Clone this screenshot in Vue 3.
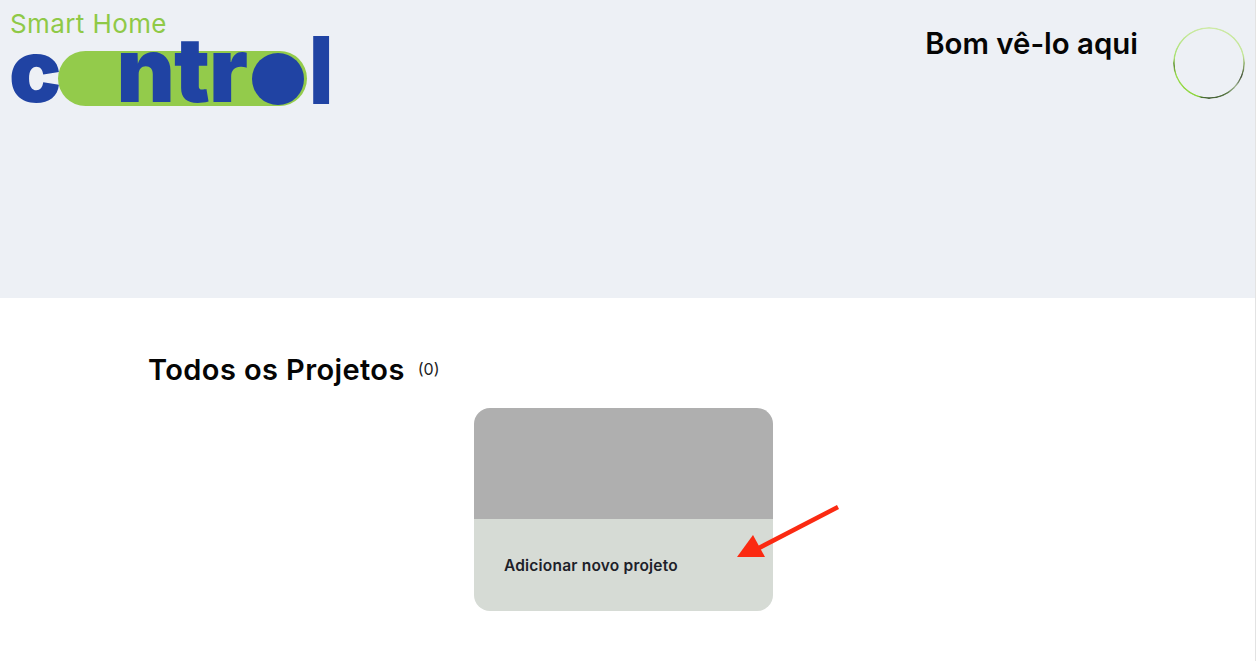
<template>
  <div class="page">
    <header class="hero">
      <div class="brand">
        <div class="brand-top">Smart Home</div>
        <div class="logo">
          <span class="logo-c">c</span>
          <div class="pill">
            <span class="logo-ntr">ntr</span>
            <span class="logo-o"></span>
          </div>
          <span class="logo-l">l</span>
        </div>
      </div>
      <div class="greeting">
        <h2>Bom vê-lo aqui</h2>
        <div class="avatar"></div>
      </div>
    </header>

    <main class="content">
      <div class="title-row">
        <h1>Todos os Projetos</h1>
        <span class="count">({{ projects.length }})</span>
      </div>
      <div class="card">
        <div class="card-thumb"></div>
        <div class="card-body">Adicionar novo projeto</div>
        <svg class="arrow" width="110" height="70" viewBox="0 0 110 70">
          <path d="M101 3 L20 45" stroke="#fb2a12" stroke-width="4.5" fill="none" />
          <path d="M0 53 L16 31 L28 53 Z" fill="#fb2a12" />
        </svg>
      </div>
    </main>
  </div>
</template>

<script setup>
import { ref } from 'vue'

const projects = ref([])
</script>

<style>
html, body { margin: 0; background: #fff; }
</style>

<style scoped>
.page {
  width: 1255px;
  height: 661px;
  overflow: hidden;
  font-family: Inter, "Liberation Sans", sans-serif;
  background: #fff;
  border-right: 1px solid #e3e3e3;
}

.hero {
  height: 298px;
  box-sizing: border-box;
  background: #edf0f5;
  display: flex;
  justify-content: space-between;
  align-items: flex-start;
  padding: 12px 10px 0 10px;
}
.brand-top {
  font-size: 26px;
  line-height: 24px;
  letter-spacing: 0.4px;
  color: #8fc947;
}
.logo {
  display: flex;
  align-items: flex-end;
  height: 70px;
  font-weight: 900;
  color: #2043a3;
}
.logo-c {
  font-size: 87px;
  line-height: 55px;
  width: 47px;
  margin-left: -1px;
  margin-right: 2px;
  margin-bottom: 8px;
}
.pill {
  width: 249px;
  height: 55px;
  box-sizing: border-box;
  border-radius: 28px;
  background: #93cb4b;
  display: flex;
  justify-content: flex-end;
  align-items: center;
  padding-right: 3px;
  gap: 5px;
}
.logo-ntr {
  font-size: 90px;
  line-height: 54px;
  letter-spacing: -1px;
  margin-bottom: 17px;
}
.logo-o {
  width: 52px;
  height: 52px;
  border-radius: 50%;
  background: #2043a3;
}
.logo-l {
  font-size: 93px;
  font-weight: 800;
  line-height: 70px;
  margin-left: 1px;
  margin-bottom: 1px;
}

.greeting {
  display: flex;
  align-items: flex-start;
  gap: 35px;
}
.greeting h2 {
  margin: 14px 0 0;
  font-size: 29.4px;
  line-height: 35px;
  font-weight: 600;
  color: #050505;
}
/* thin ring with uneven colour, from the avatar image edge */
.avatar {
  width: 72px;
  height: 72px;
  margin-top: 15px;
  border-radius: 50%;
  background: conic-gradient(
    #cfeaa8 0deg,
    #c4e69a 78deg,
    #8aa56a 95deg,
    #4a5a3f 112deg,
    #a5b898 132deg,
    #5c7a48 150deg,
    #3f5a2f 180deg,
    #4d7433 192deg,
    #8fd63f 198deg,
    #9bdc52 250deg,
    #5d8f2e 266deg,
    #a8e070 278deg,
    #c4e89a 320deg,
    #cfeaa8 360deg
  );
  -webkit-mask: radial-gradient(circle, transparent 33.9px, #000 34.7px);
  mask: radial-gradient(circle, transparent 33.9px, #000 34.7px);
}

.content {
  padding: 54px 0 0 148px;
}
.title-row {
  display: flex;
  align-items: flex-start;
  gap: 13px;
}
.title-row h1 {
  margin: 0;
  font-size: 29px;
  line-height: 36px;
  font-weight: 600;
  letter-spacing: 0.4px;
  color: #050505;
}
.count {
  font-size: 16px;
  line-height: 34px;
  color: #222;
}
.card {
  position: relative;
  width: 299px;
  height: 203px;
  margin: 20px 0 0 326px;
  display: flex;
  flex-direction: column;
}
.card-thumb {
  height: 111px;
  background: #afafaf;
  border-radius: 16px 16px 0 0;
}
.card-body {
  flex: 1;
  display: flex;
  align-items: center;
  padding: 0 30px;
  background: #d6dbd5;
  border-radius: 0 0 16px 16px;
  font-size: 15.5px;
  letter-spacing: 0.2px;
  font-weight: 600;
  color: #1d2129;
}
.arrow {
  position: absolute;
  left: 263px;
  top: 96px;
}
</style>
